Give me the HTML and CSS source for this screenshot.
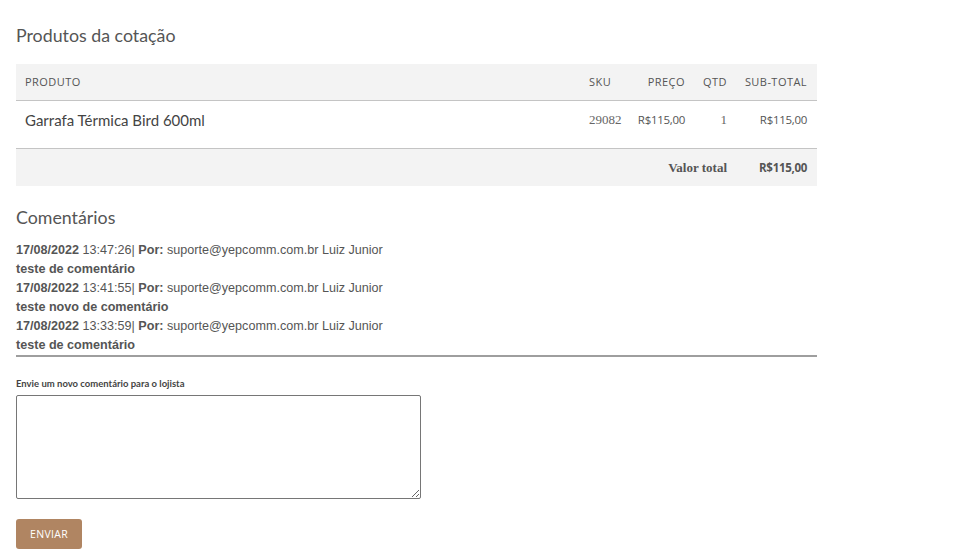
FILE: index.html
```html
<!DOCTYPE html>
<html lang="pt-BR">
<head>
<meta charset="utf-8">
<title>Produtos da cotação</title>
<link rel="stylesheet" href="styles.css">
</head>
<body>
<main class="page">
  <h2 class="title">Produtos da cotação</h2>
  <table class="products">
    <colgroup>
      <col class="w-prod">
      <col class="w-sku">
      <col class="w-price">
      <col class="w-qty">
      <col class="w-sub">
    </colgroup>
    <thead>
      <tr>
        <th class="c-prod">PRODUTO</th>
        <th class="c-sku">SKU</th>
        <th class="c-price">PREÇO</th>
        <th class="c-qty">QTD</th>
        <th class="c-sub">SUB-TOTAL</th>
      </tr>
    </thead>
    <tbody>
      <tr>
        <td class="c-prod name">Garrafa Térmica Bird 600ml</td>
        <td class="c-sku serif">29082</td>
        <td class="c-price money">R$115,00</td>
        <td class="c-qty serif">1</td>
        <td class="c-sub money">R$115,00</td>
      </tr>
    </tbody>
    <tfoot>
      <tr>
        <td colspan="4" class="total-label">Valor total</td>
        <td class="c-sub total-value">R$115,00</td>
      </tr>
    </tfoot>
  </table>

  <h2 class="title comments-title">Comentários</h2>
  <div class="comments">
    <div class="comment">
      <div><b>17/08/2022</b> 13:47:26| <b>Por:</b> suporte@yepcomm.com.br Luiz Junior</div>
      <div class="msg">teste de comentário</div>
    </div>
    <div class="comment">
      <div><b>17/08/2022</b> 13:41:55| <b>Por:</b> suporte@yepcomm.com.br Luiz Junior</div>
      <div class="msg">teste novo de comentário</div>
    </div>
    <div class="comment">
      <div><b>17/08/2022</b> 13:33:59| <b>Por:</b> suporte@yepcomm.com.br Luiz Junior</div>
      <div class="msg">teste de comentário</div>
    </div>
  </div>

  <form class="new-comment">
    <label class="label" for="msg">Envie um novo comentário para o lojista</label>
    <textarea id="msg" class="textarea"></textarea>
    <button type="button" class="btn">ENVIAR</button>
  </form>
</main>
</body>
</html>
```
FILE: styles.css
```css
html, body {
  margin: 0;
  padding: 0;
  background: #fff;
}
body {
  color: #555;
  font-family: "Liberation Sans", Arial, sans-serif;
}
.page {
  width: 801px;
  padding: 22px 16px 0 16px;
}
.title {
  margin: 0;
  font-family: Lato, "Open Sans", sans-serif;
  font-weight: 400;
  font-size: 17.8px;
  line-height: 26px;
  color: #555;
}
.products {
  width: 801px;
  table-layout: fixed;
  border-collapse: collapse;
  margin-top: 16px;
}
.w-prod { width: 573px; }
.w-sku { width: 42px; }
.w-price { width: 54px; }
.w-qty { width: 42px; }
.w-sub { width: 90px; }
.products th {
  background: #f3f3f3;
  font-family: "Open Sans", sans-serif;
  font-weight: 400;
  font-size: 11px;
  letter-spacing: 0.45px;
  color: #555;
  height: 34px;
  padding: 0 0 2px 0;
  border-bottom: 1px solid #c4c4c4;
  text-align: right;
}
.products th.c-prod { text-align: left; padding-left: 9px; }
.products th.c-sku { text-align: left; }
.products .c-sub { padding-right: 10px; }
.products tbody td {
  height: 37px;
  padding: 0 0 10px 0;
  border-bottom: 1px solid #c4c4c4;
  text-align: right;
}
.products td.name {
  text-align: left;
  padding-left: 9px;
  font-family: Lato, "Open Sans", sans-serif;
  font-size: 15px;
  color: #444;
}
.products tbody td.c-sku { text-align: left; }
.products tbody td.c-sub { padding-right: 10px; }
.serif {
  font-family: "Liberation Serif", serif;
  font-size: 13px;
  color: #666;
}
.money {
  font-family: "Open Sans", sans-serif;
  font-size: 11.5px;
  color: #555;
  letter-spacing: -0.3px;
}
.products tfoot td {
  background: #f3f3f3;
  height: 37px;
  padding: 0;
  text-align: right;
}
.products tfoot td.total-label {
  font-family: "Liberation Serif", serif;
  font-weight: 700;
  font-size: 13px;
  color: #555;
  padding-right: 0;
}
.products tfoot td.total-value {
  font-family: "Open Sans", sans-serif;
  font-weight: 700;
  font-size: 11.5px;
  color: #555;
  letter-spacing: -0.3px;
  padding-right: 10px;
}
.comments-title {
  margin-top: 18px;
}
.comments {
  margin-top: 11px;
  font-size: 12.6px;
  line-height: 19px;
  border-bottom: 2px solid #9e9e9e;
  padding-bottom: 0;
}
.comments b, .comment .msg {
  font-weight: 700;
}
.new-comment {
  display: flex;
  flex-direction: column;
  align-items: flex-start;
  margin-top: 21px;
}
.label {
  font-family: Lato, "Open Sans", sans-serif;
  font-weight: 700;
  font-size: 9.5px;
  line-height: 12px;
  color: #444;
}
.textarea {
  margin-top: 5px;
  width: 405px;
  height: 104px;
  box-sizing: border-box;
  border: 1px solid #767676;
  border-radius: 2px;
  padding: 2px;
  font-family: "Liberation Sans", sans-serif;
  resize: both;
}
.btn {
  margin-top: 20px;
  background: #b08562;
  color: #fff;
  border: none;
  border-radius: 3px;
  width: 66px;
  height: 30px;
  font-family: "Open Sans", sans-serif;
  font-weight: 500;
  font-size: 10.5px;
  letter-spacing: 0.3px;
  padding: 0;
  cursor: pointer;
}
```
